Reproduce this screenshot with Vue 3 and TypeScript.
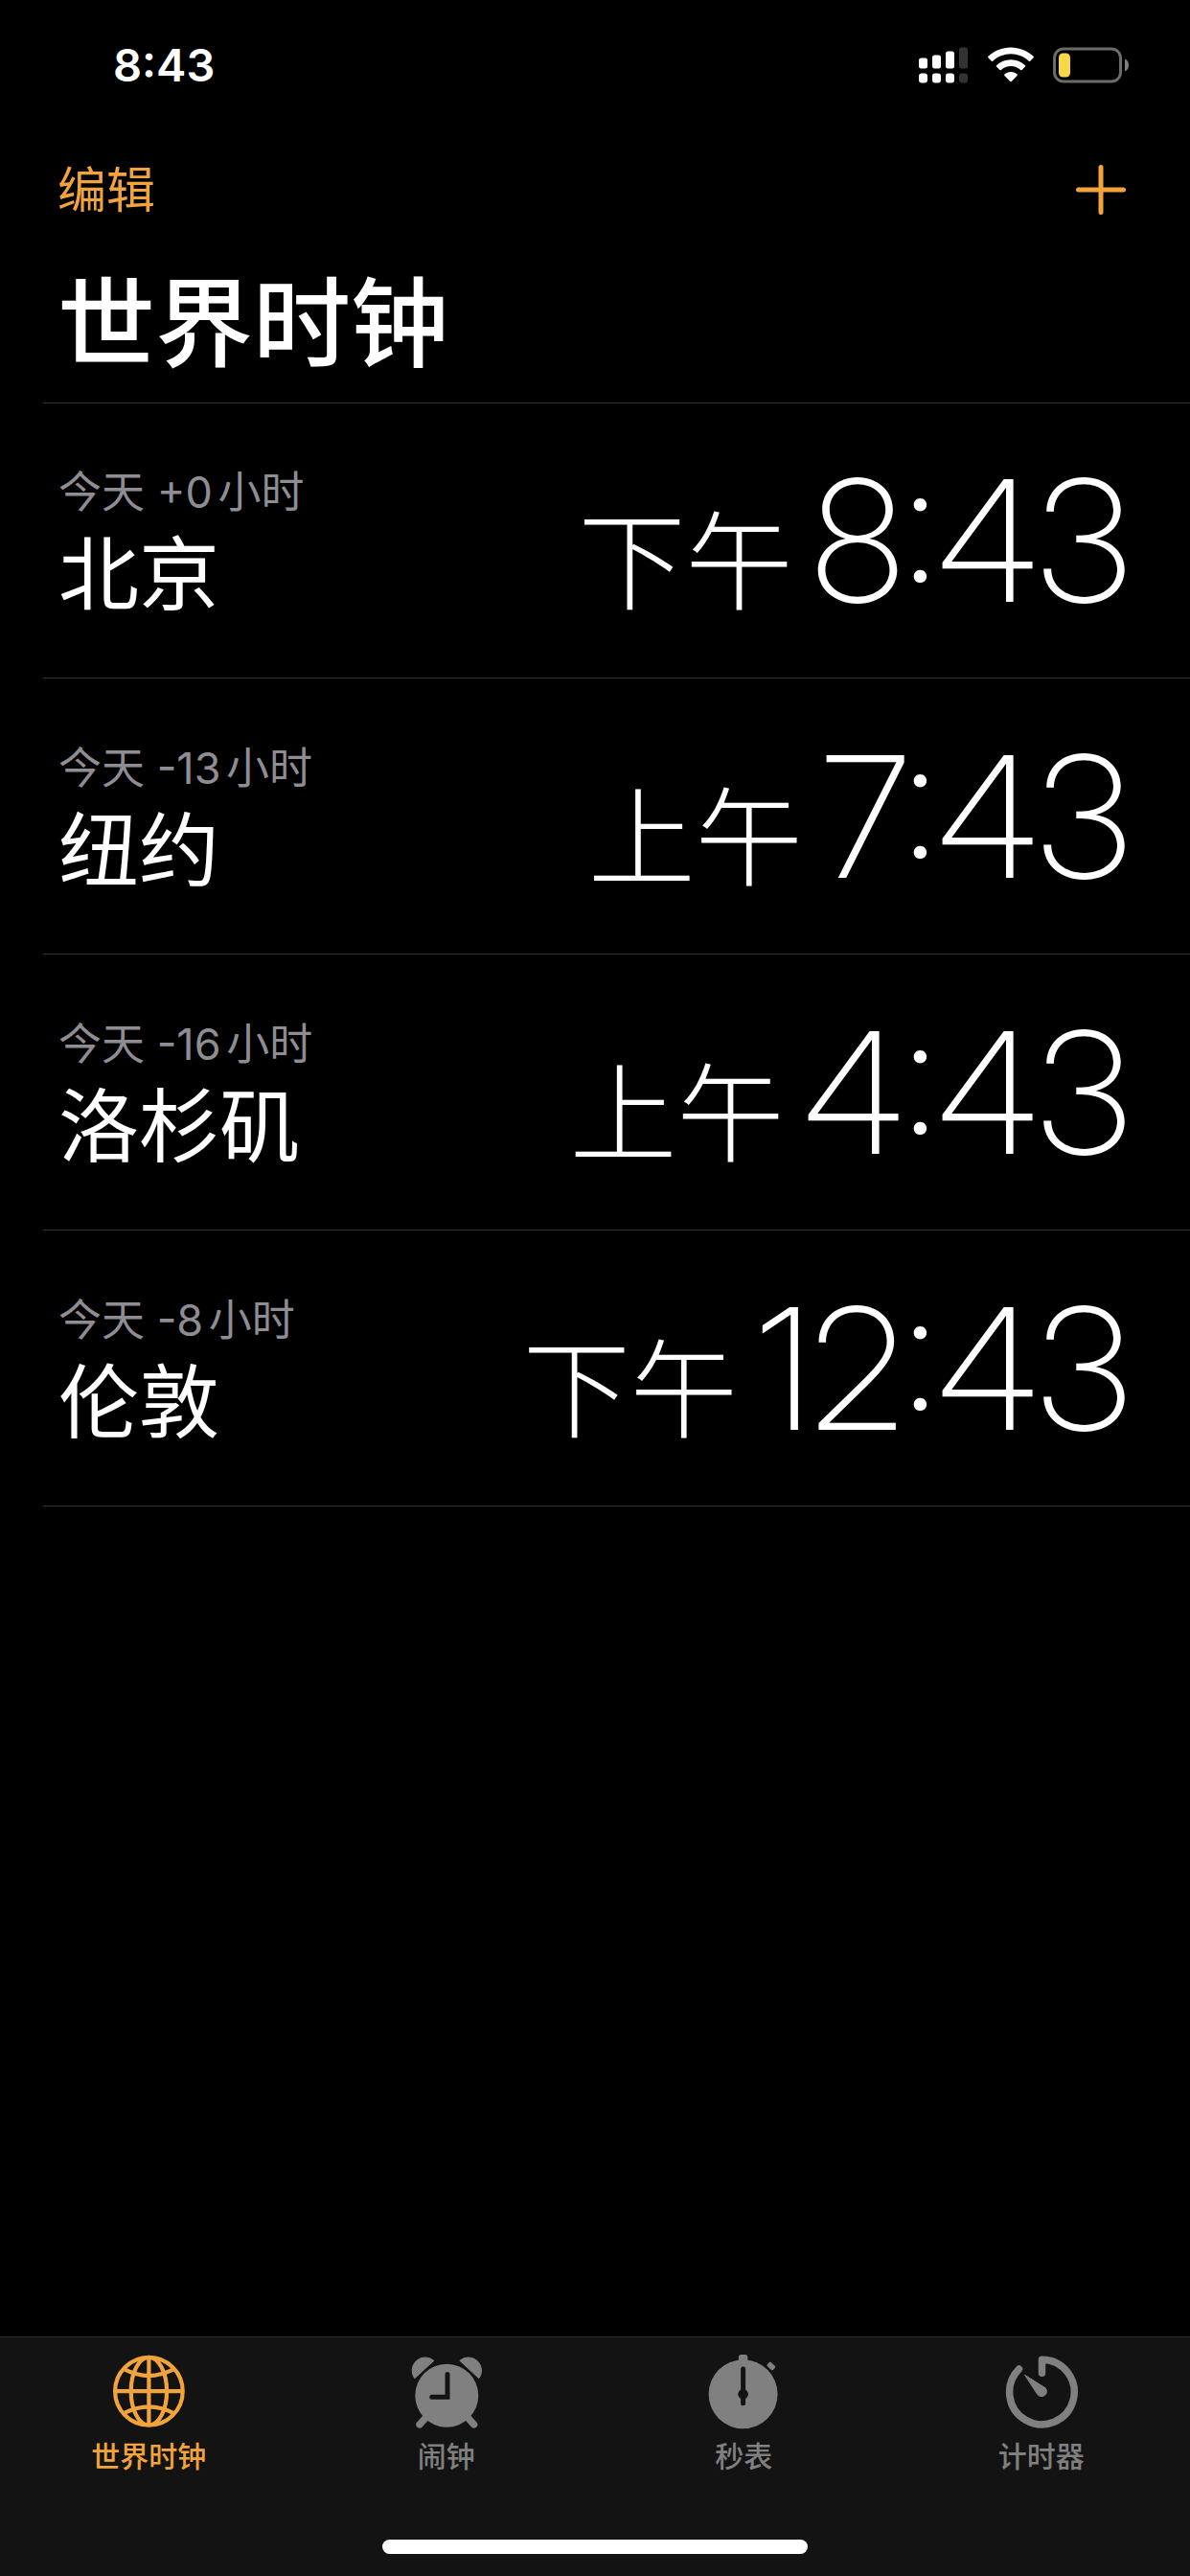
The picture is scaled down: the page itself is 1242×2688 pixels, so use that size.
<script setup lang="ts">
import { ref } from 'vue'

interface WorldClock {
  city: string
  offset: string
  period: string
  time: string
}

type TabId = 'world' | 'alarm' | 'stopwatch' | 'timer'

const clocks: WorldClock[] = [
  { city: '北京', offset: '今天 +0小时', period: '下午', time: '8:43' },
  { city: '纽约', offset: '今天 -13小时', period: '上午', time: '7:43' },
  { city: '洛杉矶', offset: '今天 -16小时', period: '上午', time: '4:43' },
  { city: '伦敦', offset: '今天 -8小时', period: '下午', time: '12:43' },
]

const tabs: { id: TabId; label: string }[] = [
  { id: 'world', label: '世界时钟' },
  { id: 'alarm', label: '闹钟' },
  { id: 'stopwatch', label: '秒表' },
  { id: 'timer', label: '计时器' },
]

const active = ref<TabId>('world')
</script>

<template>
  <div class="screen">
    <div class="status">
      <span class="status-time">8:43</span>
      <div class="status-icons">
        <svg width="52" height="38" viewBox="0 0 52 38" aria-hidden="true">
          <g fill="#fff">
            <rect x="0" y="11.5" width="9" height="11" rx="2.5" />
            <rect x="14" y="8.5" width="9" height="14" rx="2.5" />
            <rect x="28" y="4.5" width="9" height="18" rx="2.5" />
            <rect x="0" y="27.5" width="9" height="10" rx="3" />
            <rect x="14" y="27.5" width="9" height="10" rx="3" />
            <rect x="28" y="27.5" width="9" height="10" rx="3" />
          </g>
          <g fill="#333">
            <rect x="42" y="0.5" width="9" height="22" rx="2.5" />
            <rect x="42" y="27.5" width="9" height="10" rx="3" />
          </g>
        </svg>
        <svg class="wifi" width="48" height="38" viewBox="0 0 48 38" aria-hidden="true">
          <g fill="#fff">
            <path d="M24 .5C33 .5 41.500 4 47.600 9.800Q48.200 10.500 47.600 11.200L44.200 14.700Q43.500 15.300 42.800 14.700C37.800 10 31.200 7.200 24 7.200S10.200 10 5.200 14.700Q4.500 15.300 3.800 14.700L.4 11.200Q-.2 10.500.4 9.800C6.500 4 15 .5 24 .5Z" />
            <path d="M24 13.300C29.700 13.300 35 15.500 39 19.200Q39.600 19.900 39 20.500L35.500 24Q34.800 24.600 34.100 24C31.400 21.500 27.900 20.100 24 20.100S16.600 21.500 13.900 24Q13.200 24.600 12.500 24L9 20.500Q8.400 19.900 9 19.200C13 15.500 18.300 13.300 24 13.300Z" />
            <path d="M24 26C26.500 26 28.800 27 30.600 28.500Q31.200 29.200 30.600 29.900L24.700 35.900Q24 36.500 23.300 35.900L17.400 29.900Q16.800 29.200 17.400 28.500C19.200 27 21.500 26 24 26Z" />
          </g>
        </svg>
        <svg width="80" height="38" viewBox="0 0 80 38" aria-hidden="true">
          <rect x="1.500" y="2" width="69" height="34" rx="9.500" fill="none" stroke="#6b6b6b" stroke-width="3" />
          <path d="M75 12.500C77.500 13.500 79 16 79 19S77.500 24.500 75 25.500Z" fill="#808080" />
          <rect x="6" y="6.500" width="12" height="25" rx="4.500" fill="#f8d849" />
        </svg>
      </div>
    </div>

    <header>
      <div class="toolbar">
        <button type="button" class="edit">编辑</button>
        <button type="button" class="add" aria-label="添加">
          <svg width="52" height="52" viewBox="0 0 52 52" aria-hidden="true">
            <path d="M26 2.500V49.500M2.500 26H49.500" stroke="#f1a33c" stroke-width="5" stroke-linecap="round" />
          </svg>
        </button>
      </div>
      <h1>世界时钟</h1>
    </header>

    <main>
      <ul class="clocks">
        <li v-for="clock in clocks" :key="clock.city" class="clock">
          <div class="place">
            <span class="offset">{{ clock.offset }}</span>
            <span class="city">{{ clock.city }}</span>
          </div>
          <div class="now">
            <span class="period">{{ clock.period }}</span>
            <time class="digits">{{ clock.time }}</time>
          </div>
        </li>
      </ul>
    </main>

    <footer class="bottom">
      <nav class="tabs">
        <a
          v-for="tab in tabs"
          :key="tab.id"
          :href="'#' + tab.id"
          class="tab"
          :class="{ active: active === tab.id }"
          @click.prevent="active = tab.id"
        >
          <svg width="84" height="84" viewBox="0 0 84 84" aria-hidden="true">
            <g v-if="tab.id === 'world'" fill="none" stroke="currentColor" stroke-width="4.200">
              <circle cx="42.400" cy="42.200" r="35.300" />
              <ellipse cx="42.400" cy="42.200" rx="18.700" ry="35.300" />
              <path d="M42.400 7V77.500M7 42.200H77.700M17.400 19.700Q42.400 32.400 67.400 19.700M17.400 64.700Q42.400 52 67.400 64.700" />
            </g>
            <g v-else-if="tab.id === 'alarm'" fill="currentColor">
              <circle cx="42.300" cy="46.700" r="33" />
              <g stroke="currentColor" stroke-width="1" stroke-linejoin="round">
                <path d="M8.800 28.800A13.700 13.700 0 0 1 28.800 10.300Z" />
                <path d="M75.800 28.800A13.700 13.700 0 0 0 55.800 10.300Z" />
              </g>
              <path d="M22 68L13.900 77M62.600 68L70.700 77" stroke="currentColor" stroke-width="7.300" stroke-linecap="round" />
              <path class="cut" d="M43 24.500V48.300H26.700" />
            </g>
            <g v-else-if="tab.id === 'stopwatch'" fill="currentColor">
              <circle cx="41.600" cy="45.300" r="36" />
              <rect x="36.900" y="4" width="9.400" height="12" rx="2.500" />
              <rect x="66.700" y="13.200" width="8.400" height="5.600" rx="1.500" transform="rotate(43 70.900 16)" />
              <path class="cut" d="M41.600 19V54.700" />
              <circle class="hub" cx="41.600" cy="45.300" r="5.300" />
            </g>
            <g v-else fill="currentColor" stroke="currentColor" stroke-linecap="round" stroke-linejoin="round">
              <path d="M42.500 23.300V9.200A33.800 33.800 0 1 1 18.500 19.100" fill="none" stroke-width="7.500" />
              <path d="M24.900 25.500L46.100 38.800A5.300 5.300 0 1 1 38 45.800Z" stroke-width="1" />
            </g>
          </svg>
          <span>{{ tab.label }}</span>
        </a>
      </nav>
      <div class="home"></div>
    </footer>
  </div>
</template>

<style>
body {
  background: #000;
}
</style>

<style scoped>
.screen {
  display: flex;
  flex-direction: column;
  min-height: 100vh;
  background: #000;
  color: #fff;
  font-family: Inter, "Noto Sans CJK SC", sans-serif;
}

.status {
  display: flex;
  align-items: center;
  justify-content: space-between;
  height: 136px;
  padding: 0 63px 0 118px;
  box-sizing: border-box;
}

.status-time {
  font-size: 47px;
  font-weight: 600;
  line-height: 56px;
}

.status-icons {
  display: flex;
  align-items: center;
  gap: 20px;
}

button {
  display: flex;
  padding: 0;
  border: 0;
  background: none;
  color: #f1a33c;
  font: inherit;
  cursor: pointer;
}

.toolbar {
  display: flex;
  align-items: center;
  justify-content: space-between;
  height: 124px;
  padding: 0 67px 0 60px;
}

.edit {
  padding-bottom: 6px;
  font-family: "Noto Sans CJK SC", sans-serif;
  font-size: 51px;
  line-height: 72px;
}

h1 {
  margin: 0;
  padding: 0 60px 18px;
  font-family: "Noto Sans CJK SC", sans-serif;
  font-size: 102px;
  font-weight: 500;
  line-height: 142px;
}

.clocks {
  margin: 0;
  padding: 0 0 0 45px;
  list-style: none;
}

.clock {
  display: flex;
  align-items: center;
  justify-content: space-between;
  height: 288px;
  padding: 0 62px 0 16px;
  box-sizing: border-box;
  border-bottom: 1px solid #333;
}

.clock:first-child {
  box-shadow: inset 0 1px #333;
}

.place {
  display: flex;
  flex-direction: column;
  padding-top: 10px;
}

.offset {
  color: #8d8d93;
  font-size: 45px;
  line-height: 50px;
  text-autospace: normal;
}

.city {
  font-family: "Noto Sans CJK SC", sans-serif;
  font-size: 84px;
  line-height: 110px;
}

.now {
  display: flex;
  align-items: baseline;
  gap: 20px;
  padding-top: 16px;
}

.period {
  font-family: "Noto Sans CJK SC", sans-serif;
  font-size: 112px;
  font-weight: 300;
  line-height: 200px;
}

.digits {
  font-family: "Inter Display", Inter, sans-serif;
  font-size: 176px;
  font-variation-settings: "opsz" 32;
  font-weight: 250;
  line-height: 200px;
}

.bottom {
  margin-top: auto;
  padding-bottom: 23px;
  border-top: 1px solid #2a2a2a;
  background: #131313;
}

.tabs {
  display: grid;
  grid-template-columns: repeat(4, 1fr);
  padding: 14px 0 67px;
}

.tab {
  display: flex;
  flex-direction: column;
  align-items: center;
  gap: 2px;
  color: #808080;
  font-family: "Noto Sans CJK SC", sans-serif;
  font-size: 30px;
  font-weight: 500;
  line-height: 44px;
  text-decoration: none;
}

.tab.active {
  color: #f1a33c;
}

.cut {
  fill: none;
  stroke: #131313;
  stroke-width: 5px;
  stroke-linecap: round;
}

.hub {
  fill: #131313;
}

.home {
  width: 444px;
  height: 15px;
  margin: 0 auto;
  border-radius: 8px;
  background: #fff;
}
</style>
